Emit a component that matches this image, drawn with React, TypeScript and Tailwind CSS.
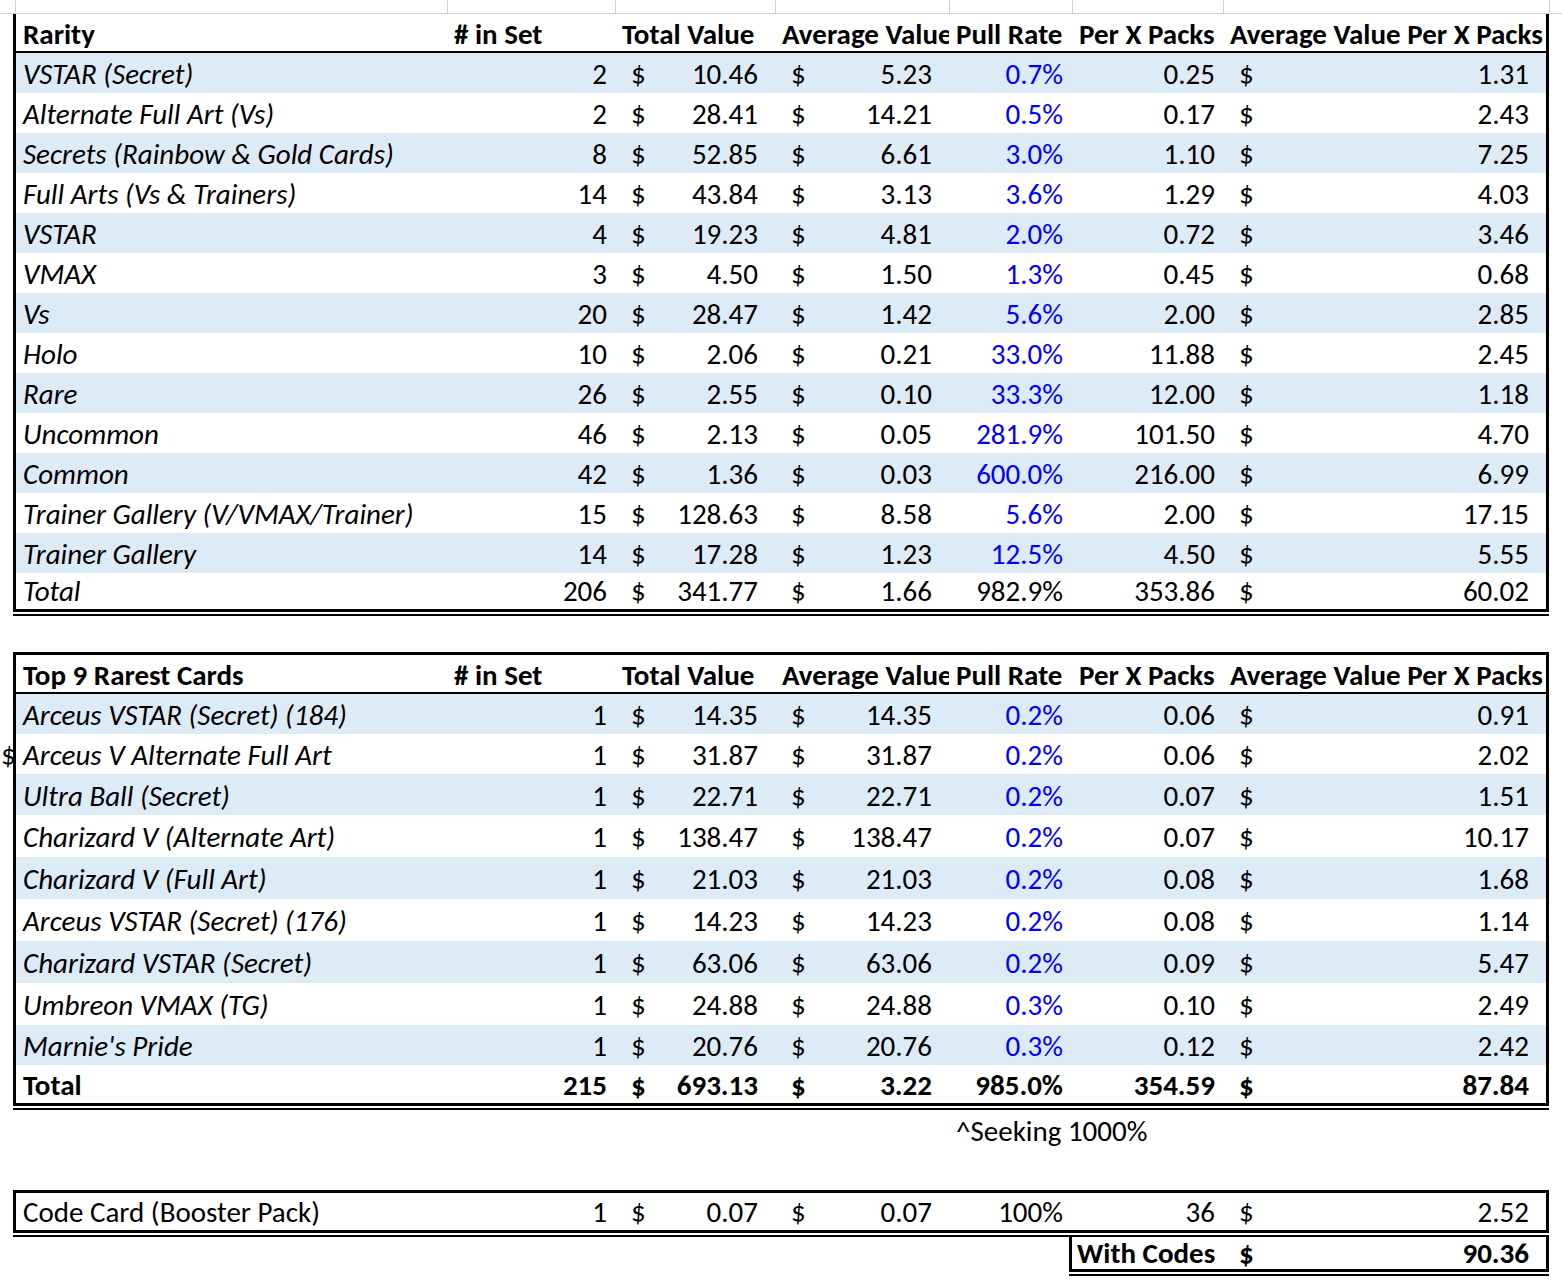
import React from "react";

// column widths taken from the sheet gridlines
const GRID = "grid grid-cols-[431px_168px_160px_174px_123px_151px_323px]";
const CELL = "flex items-center whitespace-nowrap overflow-hidden";

type Line = [string, string, string, string, string, string, string];

const rarity: Line[] = [
    ["VSTAR (Secret)", "2", "10.46", "5.23", "0.7%", "0.25", "1.31"],
    ["Alternate Full Art (Vs)", "2", "28.41", "14.21", "0.5%", "0.17", "2.43"],
    ["Secrets (Rainbow & Gold Cards)", "8", "52.85", "6.61", "3.0%", "1.10", "7.25"],
    ["Full Arts (Vs & Trainers)", "14", "43.84", "3.13", "3.6%", "1.29", "4.03"],
    ["VSTAR", "4", "19.23", "4.81", "2.0%", "0.72", "3.46"],
    ["VMAX", "3", "4.50", "1.50", "1.3%", "0.45", "0.68"],
    ["Vs", "20", "28.47", "1.42", "5.6%", "2.00", "2.85"],
    ["Holo", "10", "2.06", "0.21", "33.0%", "11.88", "2.45"],
    ["Rare", "26", "2.55", "0.10", "33.3%", "12.00", "1.18"],
    ["Uncommon", "46", "2.13", "0.05", "281.9%", "101.50", "4.70"],
    ["Common", "42", "1.36", "0.03", "600.0%", "216.00", "6.99"],
    ["Trainer Gallery (V/VMAX/Trainer)", "15", "128.63", "8.58", "5.6%", "2.00", "17.15"],
    ["Trainer Gallery", "14", "17.28", "1.23", "12.5%", "4.50", "5.55"],
];

const rarest: Line[] = [
    ["Arceus VSTAR (Secret) (184)", "1", "14.35", "14.35", "0.2%", "0.06", "0.91"],
    ["Arceus V Alternate Full Art", "1", "31.87", "31.87", "0.2%", "0.06", "2.02"],
    ["Ultra Ball (Secret)", "1", "22.71", "22.71", "0.2%", "0.07", "1.51"],
    ["Charizard V (Alternate Art)", "1", "138.47", "138.47", "0.2%", "0.07", "10.17"],
    ["Charizard V (Full Art)", "1", "21.03", "21.03", "0.2%", "0.08", "1.68"],
    ["Arceus VSTAR (Secret) (176)", "1", "14.23", "14.23", "0.2%", "0.08", "1.14"],
    ["Charizard VSTAR (Secret)", "1", "63.06", "63.06", "0.2%", "0.09", "5.47"],
    ["Umbreon VMAX (TG)", "1", "24.88", "24.88", "0.3%", "0.10", "2.49"],
    ["Marnie's Pride", "1", "20.76", "20.76", "0.3%", "0.12", "2.42"],
];
const rarestHeights = ["h-[40px]", "h-[40px]", "h-[41px]", "h-[42px]", "h-[42px]", "h-[42px]", "h-[42px]", "h-[42px]", "h-[40px]"];

const headers = ["# in Set", "Total Value", "Average Value", "Pull Rate", "Per X Packs", "Average Value Per X Packs"];

function Money({ v, pad }: { v: string; pad: string }) {
    return (
        <div className={`${CELL} ${pad} justify-between pl-[16px] pr-[17px]`}>
            <span>$</span>
            <span>{v}</span>
        </div>
    );
}

interface RowProps {
    r: Line;
    blue?: boolean;
    height?: string;
    pad?: string;
    italic?: boolean;
    bold?: boolean;
    pullBlue?: boolean;
    strayDollar?: boolean;
}

function DataRow({
    r,
    blue,
    height = "h-[40px]",
    pad = "pt-[4px]",
    italic = true,
    bold,
    pullBlue = true,
    strayDollar,
}: RowProps) {
    return (
        <div className={`${GRID} relative ${height} ${blue ? "bg-[#ddebf7]" : "bg-white"} ${bold ? "font-bold" : ""}`}>
            {/* leftover "$" peeking out of the hidden column */}
            {strayDollar && (
                <span className={`absolute -left-[15px] top-0 h-full flex items-center ${pad}`}>$</span>
            )}
            <div className={`${CELL} ${pad} pl-[7px] ${italic ? "italic" : ""}`}>{r[0]}</div>
            <div className={`${CELL} ${pad} justify-end pr-[8px]`}>{r[1]}</div>
            <Money v={r[2]} pad={pad} />
            <Money v={r[3]} pad={pad} />
            <div className={`${CELL} ${pad} justify-end pr-[9px] ${pullBlue ? "text-[#0000ff]" : ""}`}>{r[4]}</div>
            <div className={`${CELL} ${pad} justify-end pr-[8px]`}>{r[5]}</div>
            <Money v={r[6]} pad={pad} />
        </div>
    );
}

function HeaderRow({ title }: { title: string }) {
    return (
        <div className={`${GRID} h-[39px] border-b-2 border-black font-bold`}>
            <div className={`${CELL} pt-[4px] pl-[7px]`}>{title}</div>
            {headers.map((h) => (
                <div key={h} className={`${CELL} pt-[4px] pl-[7px]`}>
                    {h}
                </div>
            ))}
        </div>
    );
}

export default function App() {
    return (
        <div className="w-[1562px] h-[1286px] bg-white text-black text-[29px] font-['Carlito','Calibri','Lato',sans-serif] overflow-hidden">
            {/* sheet gridlines above the first table */}
            <div className="flex h-[14px] border-b border-[#d0d0d0]">
                <div className="w-[16px] border-r border-[#d0d0d0]" />
                <div className="w-[432px] border-r border-[#d0d0d0]" />
                <div className="w-[168px] border-r border-[#d0d0d0]" />
                <div className="w-[160px] border-r border-[#d0d0d0]" />
                <div className="w-[174px] border-r border-[#d0d0d0]" />
                <div className="w-[123px] border-r border-[#d0d0d0]" />
                <div className="w-[151px] border-r border-[#d0d0d0]" />
                <div className="w-[326px] border-r border-[#d0d0d0]" />
            </div>

            {/* Rarity table */}
            <div className="ml-[13px] w-[1536px] border-x-[3px] border-b-[3px] border-black">
                <HeaderRow title="Rarity" />
                {rarity.map((r, i) => (
                    <DataRow key={r[0]} r={r} blue={i % 2 === 0} />
                ))}
                <DataRow
                    r={["Total", "206", "341.77", "1.66", "982.9%", "353.86", "60.02"]}
                    height="h-[36px]"
                    pad="pt-[2px]"
                    pullBlue={false}
                />
            </div>
            <div className="ml-[13px] w-[1536px] mt-[2px] h-[2px] bg-black" />

            {/* Top 9 rarest */}
            <div className="mt-[36px] ml-[13px] w-[1536px] border-x-[3px] border-y-[3px] border-black">
                <HeaderRow title="Top 9 Rarest Cards" />
                {rarest.map((r, i) => (
                    <DataRow key={r[0]} r={r} blue={i % 2 === 0} height={rarestHeights[i]} strayDollar={i === 1} />
                ))}
                <DataRow
                    r={["Total", "215", "693.13", "3.22", "985.0%", "354.59", "87.84"]}
                    height="h-[38px]"
                    italic={false}
                    bold
                    pullBlue={false}
                />
            </div>
            <div className="ml-[13px] w-[1536px] mt-[2px] h-[2px] bg-black" />

            <div className={`${GRID} ml-[16px] h-[40px]`}>
                <div className={`${CELL} pt-[4px] col-start-5 col-span-3 pl-[7px]`}>^Seeking 1000%</div>
            </div>
            <div className="h-[40px]" />

            {/* Code card */}
            <div className="ml-[13px] w-[1536px] border-x-[3px] border-y-[3px] border-black">
                <DataRow
                    r={["Code Card (Booster Pack)", "1", "0.07", "0.07", "100%", "36", "2.52"]}
                    height="h-[37px]"
                    pad="pt-[2px]"
                    italic={false}
                    pullBlue={false}
                />
            </div>
            <div className="ml-[13px] w-[1536px] mt-[2px] h-[2px] bg-black" />

            <div className={`${GRID} ml-[16px]`}>
                <div className="col-start-6 col-span-2 -ml-[3px] -mr-[3px]">
                    <div className="grid grid-cols-[151px_323px] h-[35px] border-x-[3px] border-b-[3px] border-black font-bold">
                        <div className={`${CELL} pt-[2px] pl-[5px]`}>With Codes</div>
                        <Money v="90.36" pad="pt-[2px]" />
                    </div>
                    <div className="mt-[2px] h-[2px] bg-black" />
                </div>
            </div>
        </div>
    );
}
